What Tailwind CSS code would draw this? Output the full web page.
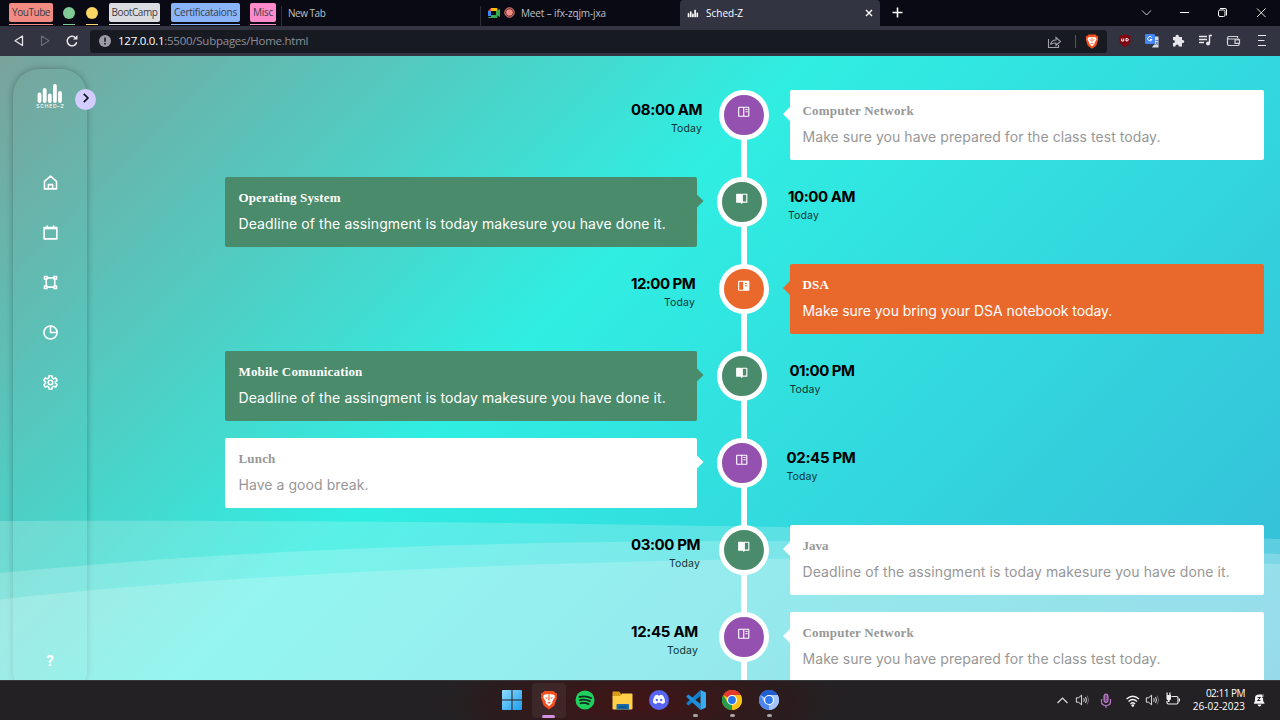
<!DOCTYPE html>
<html lang="en">
<head>
<meta charset="utf-8">
<title>Sched-Z</title>
<script src="https://cdn.jsdelivr.net/npm/@tailwindcss/browser@4"></script>
</head>
<body class="w-[1280px] h-[720px] overflow-hidden flex flex-col font-['Open_Sans',sans-serif]">
<svg class="hidden">
  <symbol id="read" viewBox="0 0 24 24"><path fill="currentColor" d="M20 3H4c-1.1 0-2 .9-2 2v14c0 1.100.9 2 2 2h16c1.100 0 2-.9 2-2V5c0-1.100-.9-2-2-2zM4 19V5h7v14H4zm9 0V5h7v14h-7zM15 7h4v2h-4zM15 11h4v2h-4z"/></symbol>
  <symbol id="readfill" viewBox="0 0 24 24"><path fill="currentColor" fill-rule="evenodd" d="M20 3H4c-1.100 0-2 .9-2 2v14c0 1.100.9 2 2 2h16c1.100 0 2-.9 2-2V5c0-1.100-.9-2-2-2zM4 19V5h7v14H4zM14 7h4v2h-4zM14 11h4v2h-4z"/></symbol>
  <symbol id="open" viewBox="0 0 24 24"><path fill="currentColor" fill-rule="evenodd" d="M3 3h7c.8 0 1.500.300 2 .8.5-.5 1.200-.8 2-.8h7c.6 0 1 .4 1 1v14c0 .6-.4 1-1 1h-7l-2 2.500L10 19H3c-.6 0-1-.4-1-1V4c0-.6.4-1 1-1zm11 2v12h6V5z"/></symbol>
  <symbol id="spk" viewBox="0 0 16 16"><path fill="none" stroke="#e6e6e6" stroke-width="1.100" d="M1.500 5.500h2.500L7.500 2.500v11L4 10.500H1.500zM10 6q1.200 2 0 4M12 4.500q2.200 3.500 0 7"/><path fill="none" stroke="#777" d="M14 3q3 5 0 10"/></symbol>
  <symbol id="bars" viewBox="0 0 28 19"><path stroke="#fff" stroke-width="3.800" stroke-linecap="round" d="M3.500 10.500v6.500M8.700 6v11M13.800 11.500v5.500M18.900 2v15M24 9v8"/></symbol>
  <symbol id="brave" viewBox="0 0 20 22"><path fill="#f4501e" d="M5 1h10l2 2 2 1-.5 3 .5 1-3 9-6 4.500L4 17 1 8l.5-1L1 4l2-1z"/><path fill="#fff" d="M4 5.500l3-1h6l3 1 .5 2.500-3 5 .5 1-4 4-4-4 .5-1-3-5z"/><path fill="#f4501e" d="M5.500 8l3 .6-.8 1.400zM14.500 8l-3 .6.8 1.400zM9.500 5h1l.2 6-.7 1-.7-1zM7.500 14l2.500-.9 2.500.9-2.500.8z"/></symbol>
</svg>

<!-- Tab strip -->
<header class="h-[26px] shrink-0 bg-[#090a14] flex items-stretch text-[10.5px] leading-[19px] text-[#bfc0c6] whitespace-nowrap">
  <div class="flex w-[281px] pl-[9px] items-start pt-[3px] text-[10px] text-[#3a3d49]">
    <div class="w-11 h-[22px] border-b border-[#f28b82]"><div class="h-[19px] rounded-[2px] bg-[#f28b82] text-center"><span class="tracking-[-0.45px]">YouTube</span></div></div>
    <div class="w-3 ml-2.5 h-[22px] border-b border-[#81c995] pt-1"><div class="size-3 rounded-full bg-[#81c995]"></div></div>
    <div class="w-3 ml-[11px] h-[22px] border-b border-[#fdd663] pt-1"><div class="size-3 rounded-full bg-[#fdd663]"></div></div>
    <div class="w-[51px] ml-[11px] h-[22px] border-b border-[#dadce0]"><div class="h-[19px] rounded-[2px] bg-[#dadce0] text-center"><span class="tracking-[-0.41px]">BootCamp</span></div></div>
    <div class="w-[69px] ml-[11px] h-[22px] border-b border-[#8ab4f8]"><div class="h-[19px] rounded-[2px] bg-[#8ab4f8] text-center"><span class="tracking-[-0.26px]">Certificataions</span></div></div>
    <div class="w-[26px] ml-2.5 h-[22px] border-b border-[#ff8bcb]"><div class="h-[19px] rounded-[2px] bg-[#ff8bcb] text-center"><span class="tracking-[-0.25px]">Misc</span></div></div>
  </div>
  <div class="w-[199px] border-l border-[#2b2c38] mt-1.5 pl-1.5 leading-[14px] text-[10px]"><span class="tracking-[-0.48px]">New Tab</span></div>
  <div class="w-[200px] border-l border-[#2b2c38] mt-1.5 pl-[7px] leading-[14px] text-[10px] flex">
    <svg class="w-3 h-3 mt-px" viewBox="0 0 12 12"><path fill="#4285f4" d="M0 4h3v5H0z"/><path fill="#ea4335" d="M0 4l3-3v3z"/><path fill="#fbbc04" d="M3 1h5.500q1 0 1 1v2H3z"/><path fill="#34a853" d="M3 8h5V4l4-2v8l-2.500-1.500V10q0 1-1 1H1q-1 0-1-1h3z"/></svg>
    <svg class="w-[11px] h-[11px] ml-1 mt-px" viewBox="0 0 11 11"><circle cx="5.500" cy="5.500" r="4.700" fill="#541f22" stroke="#f28b82"/><circle cx="5.500" cy="5.500" r="3.300" fill="#f28b82"/></svg>
    <span class="ml-[6px] tracking-[-0.13px]">Meet – ifx-zqjm-jxa</span>
  </div>
  <div class="w-[200px] bg-[#323441] rounded-t-[4px] flex items-center pl-[7px] text-white">
    <svg class="w-3 h-[9px]" viewBox="0 0 28 19"><use href="#bars"/></svg>
    <span class="ml-[7px] text-[10px]">Sched-Z</span>
    <svg class="w-2 h-2 ml-auto mr-[7px]" viewBox="0 0 8 8"><path stroke="#fff" stroke-width="1.400" d="M1 1l6 6M7 1L1 7"/></svg>
  </div>
  <svg class="w-[400px] h-[26px]" viewBox="880 0 400 26" fill="none" stroke="#fff"><path stroke-width="1.600" d="M892.500 12.500h10M897.500 7.500v10"/><path stroke="#c8c8cc" d="M1142 10.500l4.500 4.500 4.500-4.500"/><path d="M1180 12.500h9"/><rect x="1218.500" y="10" width="6.500" height="6.500" rx="1.500"/><path d="M1220 8.500h5q1.500 0 1.500 1.500v5.500"/><path stroke="#ddd" d="M1257 8.500l8.500 8.500M1265.500 8.500L1257 17"/></svg>
</header>

<!-- Toolbar -->
<div class="h-[30px] shrink-0 bg-[#323441] flex items-center">
  <svg class="w-[90px] h-[30px]" viewBox="0 26 90 30" fill="none"><path stroke="#e4e4e8" stroke-width="1.300" stroke-linejoin="round" d="M22.500 36v9.500l-7.500-4.700z"/><path stroke="#6a6b76" stroke-width="1.200" stroke-linejoin="round" d="M41.500 36v9.500l7.500-4.700z"/><path stroke="#e8e8ec" stroke-width="1.500" d="M75.500 37.700a4.800 4.800 0 1 0 1.200 4.500"/><path fill="#e8e8ec" d="M77.500 35v4.500H73z"/></svg>
  <div class="w-[1017px] h-[23px] rounded-[3px] bg-[#181a22] flex items-center text-[11.5px] text-[#8d8f98] pl-[9px]">
    <svg class="size-3" viewBox="0 0 12 12"><circle cx="6" cy="6" r="6" fill="#9a9ba3"/><path stroke="#181a22" stroke-width="1.600" d="M6 2.500v4.300M6 8v1.600"/></svg>
    <span class="ml-[7px] whitespace-nowrap tracking-[-0.25px]"><span class="text-white">127.0.0.1</span>:5500/Subpages/Home.html</span>
    <svg class="ml-auto w-[62px] h-[23px]" viewBox="1045 29 62 23" fill="none"><path stroke="#a2a3aa" stroke-width="1.100" d="M1048.500 38v8.500h10V44M1050.500 43.500q1-4.500 5.500-4.500v-2.500l4.500 4-4.500 4V42q-3.500-.2-5.500 1.500"/><path stroke="#54555f" d="M1075.500 34v13"/><use href="#brave" x="1085" y="32.500" width="14" height="16"/></svg>
  </div>
  <svg class="w-[173px] h-[30px]" viewBox="1107 26 173 30" fill="none"><path fill="#7f0510" d="M1125 34q3 1.500 5.500 1.500v5q0 4-5.500 6.500-5.500-2.500-5.500-6.500v-5q3 0 5.500-1.500z"/><path stroke="#fff" d="M1121.700 38.500v2.500h2v-2.500M1126 38.500v2.500q2.500 0 2.500-1.200 0-1.300-2.500-1.300z"/><rect x="1145" y="34" width="10" height="10" rx="1" fill="#4285f4"/><path fill="#d8dce6" d="M1155 36.500h3.500v11h-6.500l2-3h1z"/><path stroke="#fff" d="M1151.800 37.500a2.200 2.200 0 1 0 .2 2h-2"/><path stroke="#5a80c0" d="M1155.500 40.500h3M1157.500 42l-2 3M1156 42l2 3"/><path fill="#e6e6ea" d="M1173 37h2.500q-.3-2.200 1.700-2.200t1.700 2.200h3.100v3q2.300-.3 2.300 1.500t-2.300 1.500v3.500h-3.200q0-2-1.700-2t-1.700 2H1173v-3.500q2 0 2-1.500t-2-1.500z"/><path stroke="#e6e6ea" stroke-width="1.400" d="M1199 36.500h8M1199 39.500h8M1199 42.500h5M1209.500 43.500v-8h2.500"/><circle cx="1208" cy="43.500" r="2" fill="#e6e6ea"/><path stroke="#cfd0d6" stroke-width="1.200" d="M1237.500 38v-1.500H1229q-1.500 0-1.500 1.200v6.300q0 1.500 1.500 1.500h9q1 0 1-1v-1M1227.500 37.700q0 1.300 1.500 1.300h9.500v1"/><rect x="1235" y="39.800" width="4.500" height="3.600" stroke="#cfd0d6" stroke-width="1.200"/><path stroke="#e6e6ea" stroke-width="1.100" d="M1258 35.500h8M1258 40.500h6.500M1258 45.500h8"/></svg>
</div>

<!-- Page -->
<main class="relative h-[624px] shrink-0 overflow-hidden bg-[linear-gradient(315deg,rgb(101,0,94)_3%,rgb(60,132,206)_38%,rgb(48,238,226)_68%,rgb(255,25,25)_98%)] bg-[length:5120px_2496px] bg-[position:-1094px_-533px] flex">
  <nav class="ml-[13px] mt-[13px] w-[74px] h-[628px] shrink-0 rounded-[26px] shadow-[0_0_6px_rgba(0,0,0,0.3)] flex flex-col items-center text-white">
    <svg class="w-7 h-[19px] mt-[15px]" viewBox="0 0 28 19"><use href="#bars"/></svg>
    <span class="text-[5px] leading-[6px] font-['Inter',sans-serif] font-medium tracking-[0.75px] -mr-[0.75px]">SCHED–Z</span>
    <svg class="size-[17px] mt-[65px]" viewBox="0 0 24 24" fill="none" stroke="#fff" stroke-width="2.200"><path stroke-linejoin="round" d="M3.500 10.500L12 3l8.500 7.500V21h-17zM9 21v-6h6v6"/></svg>
    <svg class="size-[17px] mt-[33px]" viewBox="0 0 24 24" fill="none" stroke="#fff" stroke-width="2.200"><path stroke-linejoin="round" d="M3 5h18v16H3z"/><path stroke-width="3" d="M3 6h18"/><path d="M7.500 2v4M16.500 2v4"/></svg>
    <svg class="size-[17px] mt-[33px]" viewBox="0 0 24 24" fill="none" stroke="#fff" stroke-width="2.200"><path d="M3.500 3.500h3.500v3.500H3.500zM17 3.500h3.500v3.500h-3.500zM3.500 17h3.500v3.500H3.500zM17 17h3.500v3.500h-3.500zM7 5.500h10M7 18.500h10M6 7v10M18 7v10"/></svg>
    <svg class="size-[17px] mt-[33px]" viewBox="0 0 24 24" fill="none" stroke="#fff" stroke-width="2.200"><circle cx="12" cy="12" r="9.300"/><path d="M12 2v10h10"/></svg>
    <svg class="size-[17px] mt-[33px]" viewBox="0 0 24 24" fill="none" stroke="#fff" stroke-width="2.200"><circle cx="12" cy="12" r="3.200"/><path stroke-linejoin="round" d="M10 2.500h4l.5 3 2 1.200 2.900-1.100 2 3.500-2.400 1.900v2l2.400 1.900-2 3.500-2.900-1.100-2 1.200-.5 3h-4l-.5-3-2-1.200-2.900 1.100-2-3.500L5 13v-2L2.600 9.100l2-3.500 2.900 1.100 2-1.200z"/></svg>
    <span class="mt-[260px] font-['Roboto',sans-serif] font-bold text-[15px] leading-5">?</span>
  </nav>
  <svg class="absolute inset-0 w-[1280px] h-[624px]" viewBox="0 56 1280 624" fill="#fff" fill-opacity=".2">
    <path d="M0 521C330 519.500 760 524 1280 539V680H0z"/>
    <path d="M0 573C300 544 560 542 720 541S1080 546 1280 554V680H0z"/>
    <path d="M0 599.500C260 571 560 562 800 558.500Q1050 556 1280 564V680H0z"/>
  </svg>
  <div class="absolute left-[75px] top-[33px] size-[21px] rounded-full bg-[#d2ccff] flex items-center justify-center"><svg class="size-[10px] -mt-[3px] ml-px" viewBox="0 0 9 9" fill="none" stroke="#11101d" stroke-width="1.500"><path d="M2.500.8L6.200 4.500 2.500 8.200"/></svg></div>

  <section class="relative ml-[138px] mt-[34px] w-[1038.500px] shrink-0 flex flex-col gap-[17px] font-['Inter',sans-serif] text-[14px] whitespace-nowrap">
    <div class="absolute left-[516px] top-2 w-[5.500px] h-[640px] bg-white"></div>

    <div class="relative h-[70px] shrink-0 flex">
      <div class="ml-[406px] w-[71px] text-right pt-[9px]"><div class="text-[15px] leading-[22px] font-bold text-black text-left tracking-[-0.33px]">08:00 AM</div><div class="text-[10.500px] leading-4 text-[#0d3535] tracking-[0.13px]">Today</div></div>
      <div class="ml-[17px] size-[50px] rounded-full border-[5px] border-white bg-[#9451af] flex justify-center pt-2.5 text-white"><svg class="size-[13.500px]"><use href="#read"/></svg></div>
      <div class="relative ml-auto w-[474px] rounded-[2px] bg-white text-[#979797] pl-[13px] pt-[13px]"><i class="absolute -left-[6.500px] top-[17px] w-[7px] h-[14px] bg-white [clip-path:polygon(100%_0,0_50%,100%_100%)]"></i><div class="font-['Liberation_Serif',serif] font-bold text-[13px] leading-4 tracking-[0.19px]">Computer Network</div><div class="leading-5 mt-2 tracking-[0.06px]">Make sure you have prepared for the class test today.</div></div>
    </div>

    <div class="relative h-[70px] shrink-0 flex">
      <div class="relative w-[472px] rounded-[2px] bg-[#4a8b6b] text-white pl-[13.500px] pt-[13px]"><i class="absolute -right-[6.500px] top-[17px] w-[7px] h-[14px] bg-[#4a8b6b] [clip-path:polygon(0_0,100%_50%,0_100%)]"></i><div class="font-['Liberation_Serif',serif] font-bold text-[13px] leading-4 tracking-[0.13px]">Operating System</div><div class="leading-5 mt-2 tracking-[0.09px]">Deadline of the assingment is today makesure you have done it.</div></div>
      <div class="ml-[20px] size-[50px] rounded-full border-[5px] border-white bg-[#4a8b6b] flex justify-center pt-2.5 text-white"><svg class="size-[13.500px]"><use href="#open"/></svg></div>
      <div class="ml-[21px] w-[67px] pt-[9px]"><div class="text-[15px] leading-[22px] font-bold text-black tracking-[-0.44px]">10:00 AM</div><div class="text-[10.500px] leading-4 text-[#0d3535] tracking-[0.13px]">Today</div></div>
    </div>

    <div class="relative h-[70px] shrink-0 flex">
      <div class="ml-[406px] w-[64px] text-right pt-[9px]"><div class="text-[15px] leading-[22px] font-bold text-black text-left tracking-[-0.53px]">12:00 PM</div><div class="text-[10.500px] leading-4 text-[#0d3535] tracking-[0.13px]">Today</div></div>
      <div class="ml-[24px] size-[50px] rounded-full border-[5px] border-white bg-[#e9682c] flex justify-center pt-2.5 text-white"><svg class="size-[13.500px]"><use href="#readfill"/></svg></div>
      <div class="relative ml-auto w-[474px] rounded-[2px] bg-[#e9682c] text-white pl-[13px] pt-[13px]"><i class="absolute -left-[6.500px] top-[17px] w-[7px] h-[14px] bg-[#e9682c] [clip-path:polygon(100%_0,0_50%,100%_100%)]"></i><div class="font-['Liberation_Serif',serif] font-bold text-[13px] leading-4 tracking-[0.16px]">DSA</div><div class="leading-5 mt-2 tracking-[-0.05px]">Make sure you bring your DSA notebook today.</div></div>
    </div>

    <div class="relative h-[70px] shrink-0 flex">
      <div class="relative w-[472px] rounded-[2px] bg-[#4a8b6b] text-white pl-[13.500px] pt-[13px]"><i class="absolute -right-[6.500px] top-[17px] w-[7px] h-[14px] bg-[#4a8b6b] [clip-path:polygon(0_0,100%_50%,0_100%)]"></i><div class="font-['Liberation_Serif',serif] font-bold text-[13px] leading-4 tracking-[0.16px]">Mobile Comunication</div><div class="leading-5 mt-2 tracking-[0.09px]">Deadline of the assingment is today makesure you have done it.</div></div>
      <div class="ml-[20px] size-[50px] rounded-full border-[5px] border-white bg-[#4a8b6b] flex justify-center pt-2.5 text-white"><svg class="size-[13.500px]"><use href="#open"/></svg></div>
      <div class="ml-[22.500px] w-[65px] pt-[9px]"><div class="text-[15px] leading-[22px] font-bold text-black tracking-[-0.5px]">01:00 PM</div><div class="text-[10.500px] leading-4 text-[#0d3535] tracking-[0.13px]">Today</div></div>
    </div>

    <div class="relative h-[70px] shrink-0 flex">
      <div class="relative w-[472px] rounded-[2px] bg-white text-[#979797] pl-[13.500px] pt-[13px]"><i class="absolute -right-[6.500px] top-[17px] w-[7px] h-[14px] bg-white [clip-path:polygon(0_0,100%_50%,0_100%)]"></i><div class="font-['Liberation_Serif',serif] font-bold text-[13px] leading-4 tracking-[0.17px]">Lunch</div><div class="leading-5 mt-2 tracking-[0.06px]">Have a good break.</div></div>
      <div class="ml-[20px] size-[50px] rounded-full border-[5px] border-white bg-[#9451af] flex justify-center pt-2.5 text-white"><svg class="size-[13.500px]"><use href="#read"/></svg></div>
      <div class="ml-[19.500px] w-[69px] pt-[9px]"><div class="text-[15px] leading-[22px] font-bold text-black tracking-[-0.32px]">02:45 PM</div><div class="text-[10.500px] leading-4 text-[#0d3535] tracking-[0.13px]">Today</div></div>
    </div>

    <div class="relative h-[70px] shrink-0 flex">
      <div class="ml-[406px] w-[69px] text-right pt-[9px]"><div class="text-[15px] leading-[22px] font-bold text-black text-left tracking-[-0.4px]">03:00 PM</div><div class="text-[10.500px] leading-4 text-[#0d3535] tracking-[0.13px]">Today</div></div>
      <div class="ml-[19px] size-[50px] rounded-full border-[5px] border-white bg-[#4a8b6b] flex justify-center pt-2.5 text-white"><svg class="size-[13.500px]"><use href="#open"/></svg></div>
      <div class="relative ml-auto w-[474px] rounded-[2px] bg-white text-[#979797] pl-[13px] pt-[13px]"><i class="absolute -left-[6.500px] top-[17px] w-[7px] h-[14px] bg-white [clip-path:polygon(100%_0,0_50%,100%_100%)]"></i><div class="font-['Liberation_Serif',serif] font-bold text-[13px] leading-4">Java</div><div class="leading-5 mt-2 tracking-[0.09px]">Deadline of the assingment is today makesure you have done it.</div></div>
    </div>

    <div class="relative h-[70px] shrink-0 flex">
      <div class="ml-[406px] w-[67px] text-right pt-[9px]"><div class="text-[15px] leading-[22px] font-bold text-black text-left tracking-[-0.3px]">12:45 AM</div><div class="text-[10.500px] leading-4 text-[#0d3535] tracking-[0.13px]">Today</div></div>
      <div class="ml-[21px] size-[50px] rounded-full border-[5px] border-white bg-[#9451af] flex justify-center pt-2.5 text-white"><svg class="size-[13.500px]"><use href="#read"/></svg></div>
      <div class="relative ml-auto w-[474px] rounded-[2px] bg-white text-[#979797] pl-[13px] pt-[13px]"><i class="absolute -left-[6.500px] top-[17px] w-[7px] h-[14px] bg-white [clip-path:polygon(100%_0,0_50%,100%_100%)]"></i><div class="font-['Liberation_Serif',serif] font-bold text-[13px] leading-4 tracking-[0.19px]">Computer Network</div><div class="leading-5 mt-2 tracking-[0.06px]">Make sure you have prepared for the class test today.</div></div>
    </div>
  </section>
</main>

<!-- Taskbar -->
<footer class="h-10 shrink-0 border-t border-[#3a3a3d] bg-[#242124] bg-[radial-gradient(ellipse_200px_60px_at_640px_22px,#421516,#2a1c1e_75%,transparent)] flex items-center text-white">
  <div class="ml-[493.500px] w-[294px] grid grid-cols-8 h-full -mt-px shrink-0">
    <div class="flex items-center justify-center"><svg class="size-5" viewBox="0 0 20 20"><defs><linearGradient id="w" x2="1" y2="1"><stop stop-color="#8fdcfb"/><stop offset="1" stop-color="#1b9cf0"/></linearGradient></defs><path fill="url(#w)" d="M0 1q0-1 1-1h8.500v9.500H0zM10.500 0H19q1 0 1 1v8.500h-9.500zM0 10.500h9.500V20H1q-1 0-1-1zM10.500 10.500H20V19q0 1-1 1h-8.500z"/></svg></div>
    <div class="relative flex items-center justify-center my-[2px] mx-[1.500px] rounded bg-white/6"><svg class="w-[18px] h-5"><use href="#brave"/></svg><i class="absolute bottom-0 w-[13px] h-[2.500px] rounded bg-[#d38fe0]"></i></div>
    <div class="flex items-center justify-center"><svg class="size-5" viewBox="0 0 20 20"><circle cx="10" cy="10" r="9.500" fill="#1ed15e"/><path fill="none" stroke="#14271b" stroke-linecap="round" stroke-width="1.900" d="M4.500 7q6-1.700 11.500 1M5 10.200q5-1.500 9.800 1M5.500 13.300q4-1.200 8 .8"/></svg></div>
    <div class="flex items-center justify-center"><svg class="size-[21px]" viewBox="0 0 21 20"><path fill="#d99a16" d="M.5 2q0-1 1-1H7l2 2v3H.5z"/><path fill="#ffcf48" d="M.5 5.500H8L10 3h9.500q1 0 1 1v14q0 1-1 1h-18q-1 0-1-1z"/><path fill="#1769a8" d="M4.500 19v-4.500q0-1 1-1h10.500q1 0 1 1V19z"/><path fill="#0c4b80" d="M7 16h7.500v1.300H7z"/></svg></div>
    <div class="flex items-center justify-center"><svg class="size-5" viewBox="0 0 20 20"><circle cx="10" cy="10" r="10" fill="#5865f2"/><path fill="#fff" d="M6 5.500q1.500-.8 2.500-.8l.5.800h2l.5-.8q1 0 2.500.8 2.300 3.500 2 7-1.500 1.300-3.200 1.500l-.8-1.200H8L7.200 14Q5.500 13.800 4 12.500q-.3-3.500 2-7z"/><circle cx="7.800" cy="10" r="1.200" fill="#5865f2"/><circle cx="12.200" cy="10" r="1.200" fill="#5865f2"/></svg></div>
    <div class="relative flex items-center justify-center"><svg class="size-5" viewBox="0 0 20 20"><path fill="#1080cc" d="M14.500 0v6L2.500 15.500.5 14v-1z"/><path fill="#1c8fdd" d="M14.500 20v-6L2.500 4.500.5 6v1z"/><path fill="#36aaf2" d="M14.500 0L20 2.500v15L14.500 20z"/></svg><i class="absolute bottom-[3px] w-[5px] h-[2.500px] rounded bg-[#a8a4a4]"></i></div>
    <div class="relative flex items-center justify-center"><svg class="size-5" viewBox="0 0 20 20"><circle cx="10" cy="10" r="10" fill="#fbc116"/><path fill="#e33b2e" d="M10 10L1.300 5A10 10 0 0 1 18.700 5z"/><path fill="#269c4b" d="M10 10l0 10A10 10 0 0 1 1.300 5L5.700 12.500z"/><path fill="#fbc116" d="M10 5h8.700A10 10 0 0 1 10 20l4.300-7.500z"/><circle cx="10" cy="10" r="5" fill="#fff"/><circle cx="10" cy="10" r="3.900" fill="#2a75e8"/></svg><i class="absolute bottom-[3px] w-[5px] h-[2.500px] rounded bg-[#a8a4a4]"></i></div>
    <div class="relative flex items-center justify-center"><svg class="size-5" viewBox="0 0 20 20"><circle cx="10" cy="10" r="10" fill="#a4c4fa"/><path fill="#1f5fd0" d="M10 10L1.300 5A10 10 0 0 1 18.700 5z"/><path fill="#4a86ee" d="M10 10l0 10A10 10 0 0 1 1.300 5L5.700 12.500z"/><path fill="#a4c4fa" d="M10 5h8.700A10 10 0 0 1 10 20l4.300-7.500z"/><circle cx="10" cy="10" r="5" fill="#fff"/><circle cx="10" cy="10" r="3.900" fill="#2f78ee"/></svg><i class="absolute bottom-[3px] w-[5px] h-[2.500px] rounded bg-[#a8a4a4]"></i></div>
  </div>
  <svg class="ml-[262.500px] -mt-px w-[135px] h-10 shrink-0" viewBox="1050 680 135 40" fill="none"><path stroke="#ddd" stroke-width="1.200" d="M1057.500 703l5-5 5 5"/><use href="#spk" x="1075" y="693" width="14" height="14"/><path stroke="#b77ac4" stroke-width="1.200" d="M1101.500 699v2.500q0 4 4.500 4t4.500-4V699M1106 705.500v2.500"/><rect x="1104" y="694" width="4" height="8.500" rx="2" stroke="#d08fdd" fill="#7a4a88"/><path stroke="#f0f0f0" stroke-width="1.300" d="M1126.500 699q6.300-5.500 12.500 0M1128.500 701.500q4.300-4 8.500 0M1130.500 704q2.300-2.500 4.500 0"/><circle cx="1132.800" cy="705.500" r="1.300" fill="#fff"/><use href="#spk" x="1145" y="693" width="14" height="14"/><path stroke="#eee" stroke-width="1.200" d="M1171.500 696.500h5q1.500 0 1.500 1.500v4.500q0 1.500-1.500 1.500h-8q-1.500 0-1.500-1.500V701"/><path stroke="#eee" d="M1179.500 698.500v3"/><path fill="#eee" d="M1166.500 692.500h1.200v2.500h1.600v-2.500h1.200v2.500h.5v3.500q0 1.500-1.500 2v1.500h-1.500v-1.500q-1.500-.5-1.500-2z"/></svg>
  <div class="w-[60px] ml-auto -mt-px text-right text-[10px] leading-[13px] whitespace-nowrap shrink-0"><div class="tracking-[-0.5px]">02:11 PM</div><div>26-02-2023</div></div>
  <svg class="ml-2 mr-[14px] -mt-px w-[13px] h-[14px] shrink-0" viewBox="0 0 13 14"><path fill="#f2f2f2" d="M1 10q1-1.500 1-3.500V5q0-3.500 4-3.500h5V4L10 5.500v1q0 2 1.500 3.500v.8H1zM4.500 11.500h4q-.5 2-2 2t-2-2z"/><path fill="none" stroke="#2a272a" d="M4.500 4.500h3l-3 3h3M9 2h2.500L9.500 4.500H12"/></svg>
</footer>
</body>
</html>
